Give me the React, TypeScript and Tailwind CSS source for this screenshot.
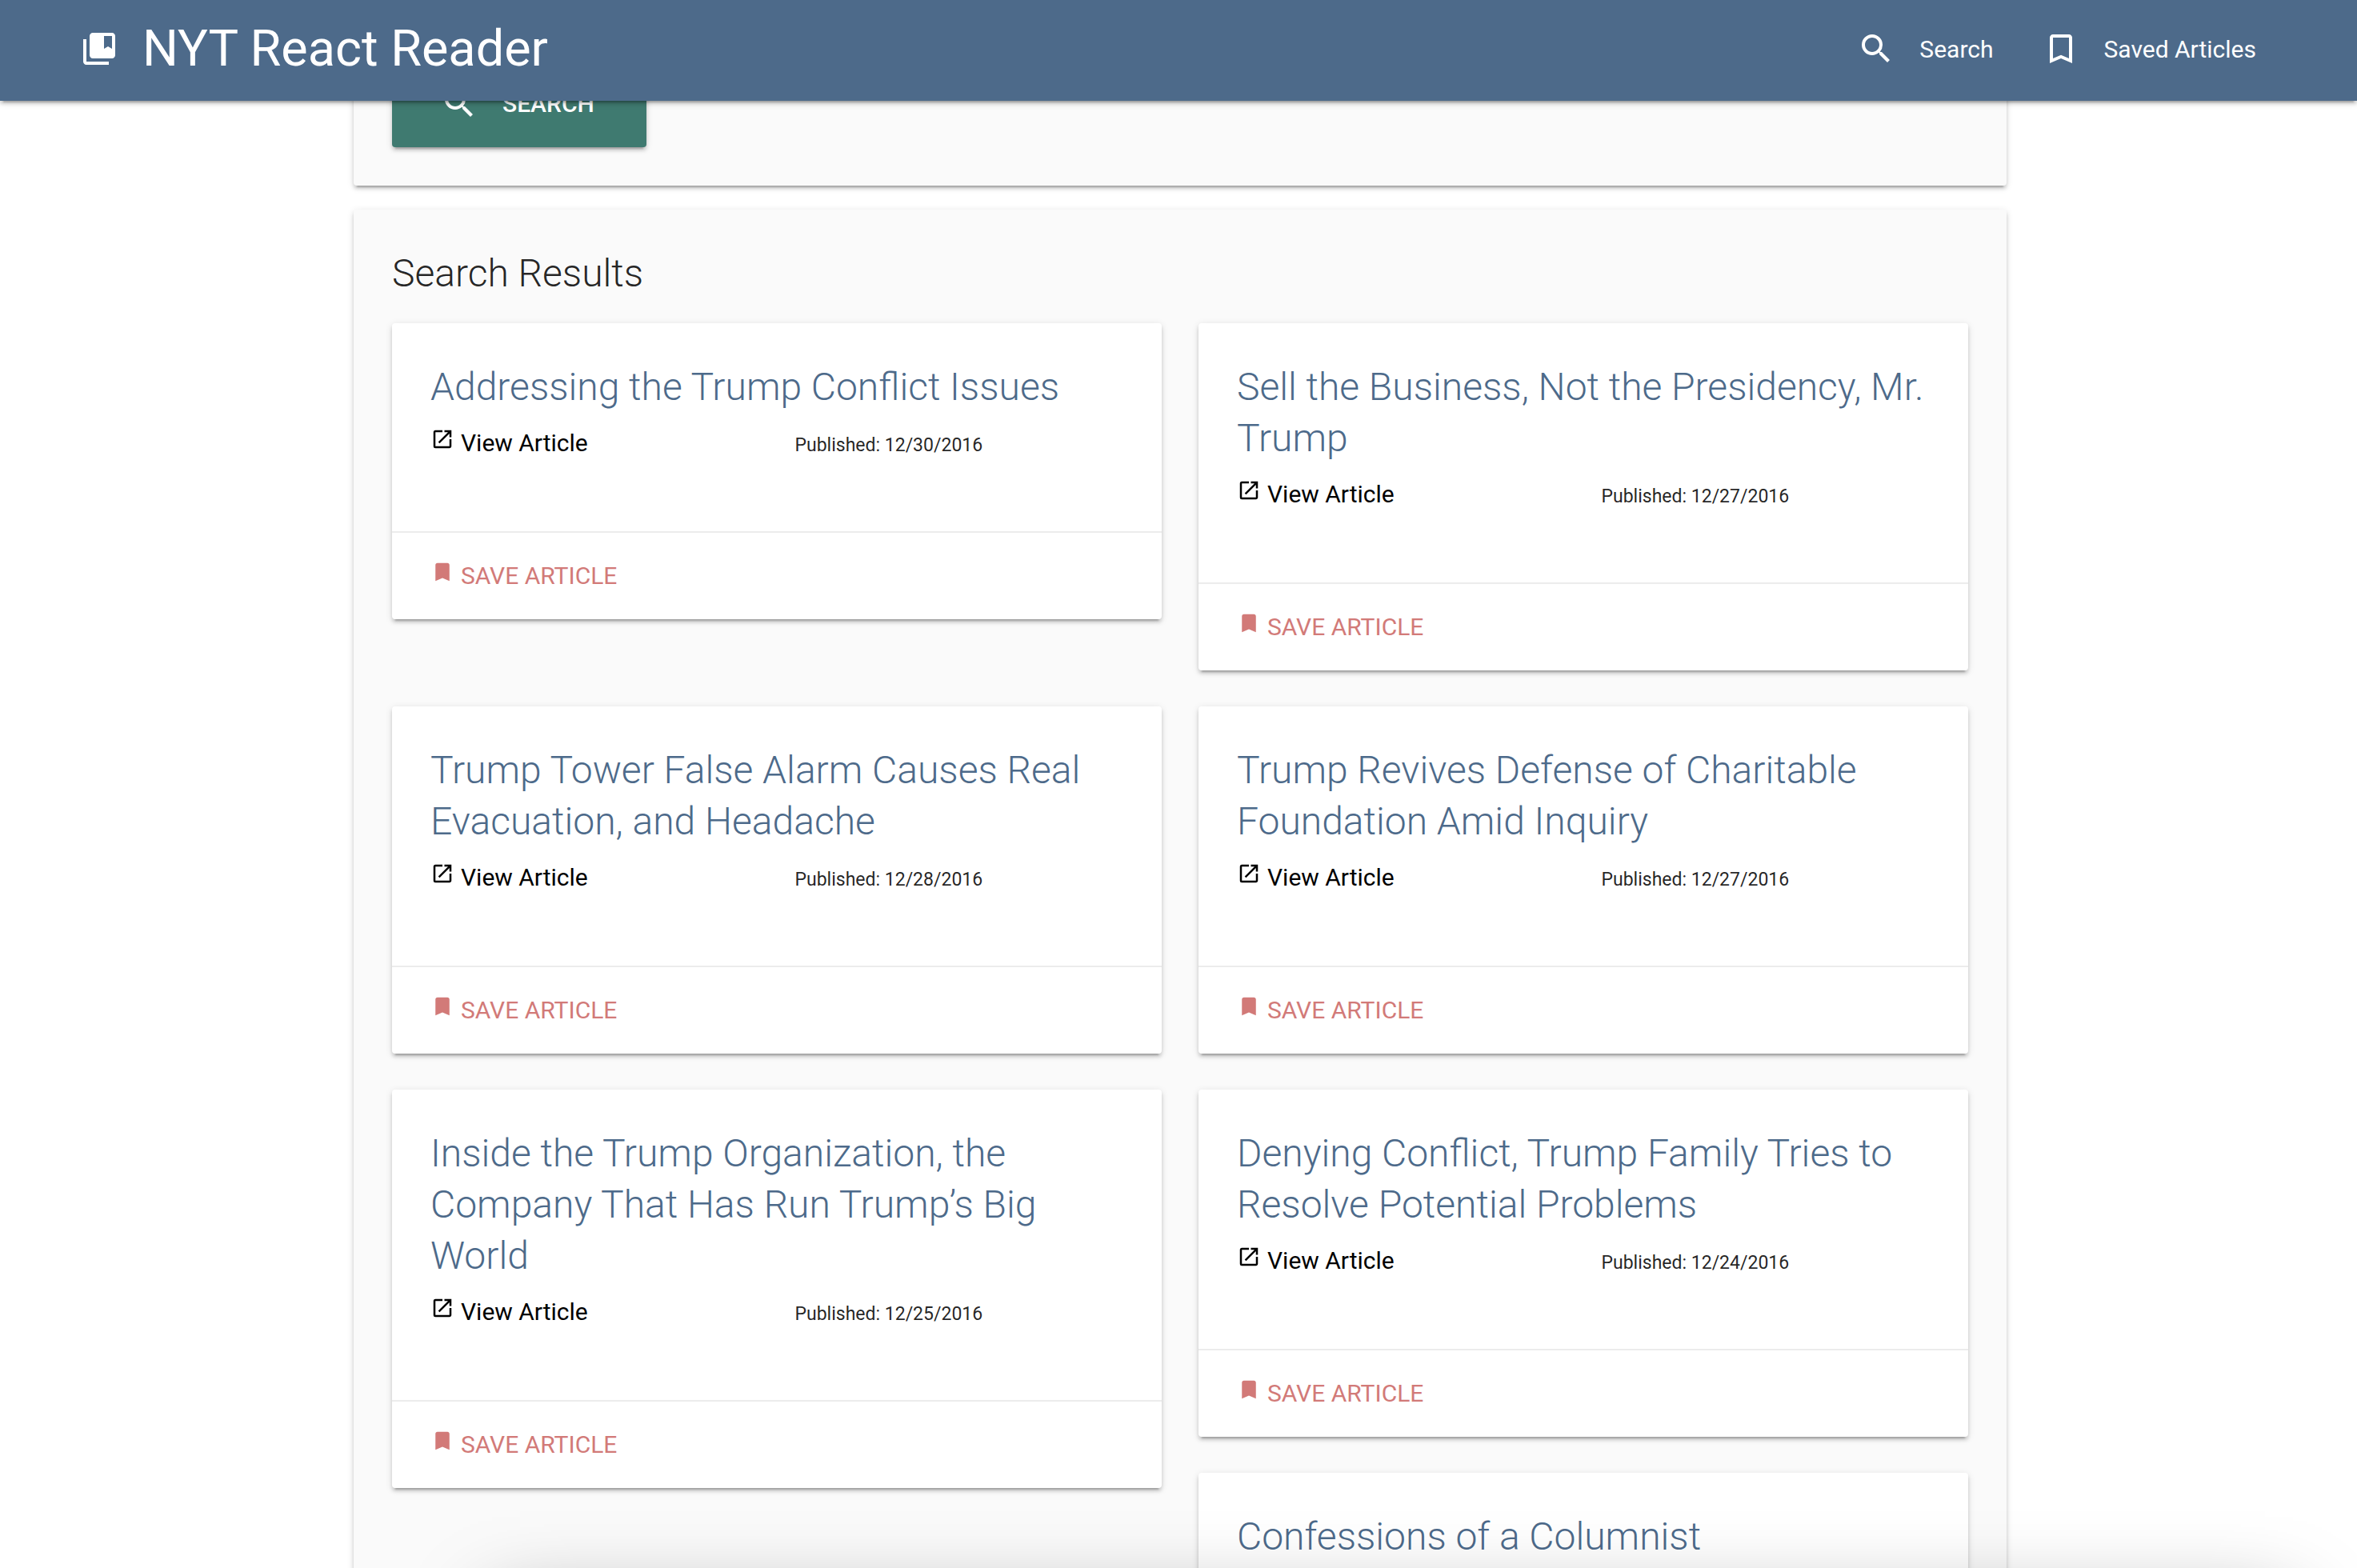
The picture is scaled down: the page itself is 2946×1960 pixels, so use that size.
import React from "react";
import {
  MdBookmark,
  MdBookmarkBorder,
  MdCollectionsBookmark,
  MdOpenInNew,
  MdSearch,
} from "react-icons/md";

type Article = { title: string; published: string; tall?: boolean };

const articles: Article[] = [
  { title: "Addressing the Trump Conflict Issues", published: "12/30/2016" },
  { title: "Sell the Business, Not the Presidency, Mr. Trump", published: "12/27/2016" },
  { title: "Trump Tower False Alarm Causes Real Evacuation, and Headache", published: "12/28/2016" },
  { title: "Trump Revives Defense of Charitable Foundation Amid Inquiry", published: "12/27/2016" },
  {
    title: "Inside the Trump Organization, the Company That Has Run Trump’s Big World",
    published: "12/25/2016",
    tall: true,
  },
  { title: "Denying Conflict, Trump Family Tries to Resolve Potential Problems", published: "12/24/2016" },
  { title: "Confessions of a Columnist", published: "12/24/2016" },
];

const depth =
  "shadow-[0_4px_4px_rgba(0,0,0,0.14),0_2px_10px_rgba(0,0,0,0.12),0_6px_2px_-4px_rgba(0,0,0,0.2)]";

function ArticleCard({ article }: { article: Article }) {
  return (
    <article className={`rounded-[4px] bg-white ${depth} ${article.tall ? "row-span-2" : ""}`}>
      <div className="p-12">
        <h3 className="text-[48px] leading-[64px] font-light text-[#4d6a8a]">{article.title}</h3>
        <div className="grid grid-cols-2 items-baseline gap-x-[45px] pt-4 pb-10">
          <a href="#article" className="flex items-baseline gap-2 text-[30px] leading-[44px] text-black">
            <MdOpenInNew className="size-[30px]" aria-hidden />
            View Article
          </a>
          <p className="text-[23px] leading-none text-black/87">Published: {article.published}</p>
        </div>
      </div>
      <div className="border-t-2 border-[#ececec] px-12 py-8">
        <button
          type="button"
          className="flex items-baseline gap-2 text-[30px] leading-[44px] text-[#d27a78] uppercase"
        >
          <MdBookmark className="size-[30px]" aria-hidden />
          Save Article
        </button>
      </div>
    </article>
  );
}

export default function App() {
  return (
    <div className="h-screen overflow-hidden bg-white font-[Roboto,sans-serif] text-black/87">
      <header
        className={`relative z-10 flex h-[126px] items-center justify-between bg-[#4d6a8a] pr-[126px] pb-1 pl-[100px] text-white ${depth}`}
      >
        <a href="#home" className="flex items-center gap-[30px] text-[63px] leading-[120px]">
          <MdCollectionsBookmark className="size-12" aria-hidden />
          NYT React Reader
        </a>
        <nav className="flex gap-[60px] text-[30px]">
          <a href="#search" className="flex items-center gap-[30px]">
            <MdSearch className="size-12" aria-hidden />
            Search
          </a>
          <a href="#saved" className="flex items-center gap-[30px]">
            <MdBookmarkBorder className="size-12" aria-hidden />
            Saved Articles
          </a>
        </nav>
      </header>

      <main className="-mt-[98px] pl-1">
        <div className="mx-auto flex max-w-[2066px] flex-col gap-[30px]">
          <section className={`rounded-[4px] bg-[#fafafa] p-12 ${depth}`}>
            <button
              type="submit"
              className={`flex h-[108px] min-w-[318px] items-center gap-[30px] rounded-[4px] bg-[#3f7a70] px-[60px] pb-0.5 text-[30px] font-medium text-white uppercase ${depth}`}
            >
              <MdSearch className="size-12" aria-hidden />
              Search
            </button>
          </section>

          <section className={`rounded-[4px] bg-[#fafafa] p-12 ${depth}`}>
            <h2 className="mb-[30px] text-[48px] leading-[64px] font-light">Search Results</h2>
            <div className="grid grid-cols-2 items-start gap-x-[46px] gap-y-[45px]">
              {articles.map((article) => (
                <ArticleCard key={article.title} article={article} />
              ))}
            </div>
          </section>
        </div>
      </main>

      <div
        aria-hidden
        className="pointer-events-none fixed top-full right-[80px] left-[615px] z-20 mt-[50px] h-[400px] shadow-[0_0_100px_rgba(0,0,0,0.4)]"
      />
    </div>
  );
}
